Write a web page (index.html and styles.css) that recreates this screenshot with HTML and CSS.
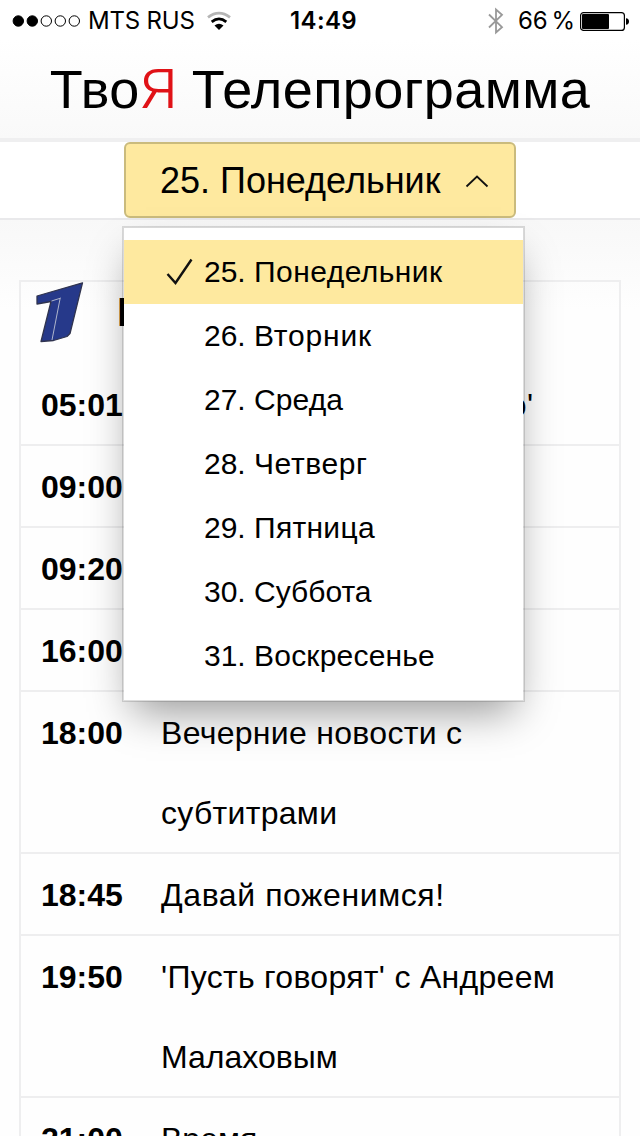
FILE: index.html
```html
<!DOCTYPE html>
<html lang="ru">
<head>
<meta charset="utf-8">
<title>ТвоЯ Телепрограмма</title>
<link rel="stylesheet" href="styles.css">
</head>
<body>
<div class="status">
  <div class="status-side">
    <svg class="signal" width="70" height="14" viewBox="0 0 70 14"><g stroke="#000" stroke-width="1"><circle cx="6.3" cy="7" r="5.2" fill="#000"/><circle cx="20.3" cy="7" r="5.2" fill="#000"/><circle cx="34.3" cy="7" r="5.2" fill="none"/><circle cx="48.3" cy="7" r="5.2" fill="none"/><circle cx="62.3" cy="7" r="5.2" fill="none"/></g></svg>
    <span class="carrier">MTS RUS</span>
    <svg class="wifi" width="24" height="20" viewBox="0 0 24 20"><g fill="none" stroke-width="2.8"><path d="M1 6.3Q12 -2 23 6.3" stroke="#b5b5b5"/><path d="M4.7 10.8Q12 5 19.3 10.8" stroke="#000"/></g><path d="M7.500 14.500Q12 10.800 16.500 14.500L12 19Z"/></svg>
  </div>
  <div class="clock">14:49</div>
  <div class="status-side status-right">
    <svg class="bluetooth" width="16" height="28" viewBox="0 0 16 28"><path d="M1 7.5L14 20.2L8 25.5V2.5L14 7.8L1 20.5" fill="none" stroke="#999" stroke-width="1.8"/></svg>
    <span class="percent">66 %</span>
    <svg width="50" height="20" viewBox="0 0 50 20"><rect x=".6" y="1.6" width="43.8" height="17.8" rx="3" fill="none" stroke="#000" stroke-width="1.2"/><rect x="2" y="3" width="27" height="15" rx="1"/><path d="M46 7.3Q49 7.5 49 10.5T46 13.7Z"/></svg>
  </div>
</div>
<header class="site-header"><h1 class="logo">Тво<span class="logo-accent">Я</span> Телепрограмма</h1></header>
<nav class="day-bar">
  <div class="day-picker">
    <button class="day-button"><span class="day-current">25. Понедельник</span>
      <svg class="chevron" width="24" height="14" viewBox="0 0 24 14"><path d="M1.500 12.500L12 2.500L22.500 12.500" fill="none" stroke="#111" stroke-width="1.800"/></svg>
    </button>
    <ul class="menu">
      <li class="menu-item selected"><svg class="check" width="28" height="28" viewBox="0 0 28 28"><path d="M1.500 16L9.500 25L25.500 1.500" fill="none" stroke="#111" stroke-width="2.400"/></svg><div>25. <span class="track-4">Понедельник</span></div></li>
      <li class="menu-item"><div>26. <span class="track-6">Вторник</span></div></li>
      <li class="menu-item"><div>27. <span class="track-1">Среда</span></div></li>
      <li class="menu-item"><div>28. <span class="track-5">Четверг</span></div></li>
      <li class="menu-item"><div>29. <span class="track-3">Пятница</span></div></li>
      <li class="menu-item"><div>30. Суббота</div></li>
      <li class="menu-item"><div>31. <span class="track-2">Воскресенье</span></div></li>
    </ul>
  </div>
</nav>
<main class="content">
  <section class="channel">
    <div class="channel-head">
      <svg class="channel-logo" width="54" height="66" viewBox="0 0 54 66"><path d="M4 14L49.500 0.800L37 51.500L34 54.500L20.500 58.500L8 59.500L18 19.500L4 22Z" fill="#26398a" stroke="#30344f" stroke-width="1.300" stroke-linejoin="round"/><path d="M27 17L19 58M18.500 19L28 16" fill="none" stroke="#aeb5cc" stroke-width="1"/></svg>
      <h2 class="channel-name">Первый канал</h2>
    </div>
    <div class="row"><time>05:01</time><p class="track-3">Телеканал 'Доброе утро'</p></div>
    <div class="row"><time>09:00</time><p>Новости</p></div>
    <div class="row"><time>09:20</time><p>Сегодня вечером</p></div>
    <div class="row"><time>16:00</time><p>Мужское/Женское</p></div>
    <div class="row"><time>18:00</time><p class="track-3">Вечерние новости с<br>субтитрами</p></div>
    <div class="row"><time>18:45</time><p class="track-5">Давай поженимся!</p></div>
    <div class="row"><time>19:50</time><p><span class="track-3">'Пусть говорят' с Андреем</span><br>Малаховым</p></div>
    <div class="row"><time>21:00</time><p>Время</p></div>
  </section>
</main>
</body>
</html>
```
FILE: styles.css
```css
* { box-sizing: border-box; }
html { height: 1136px; overflow: hidden; }
body { margin: 0; width: 640px; height: 1136px; overflow: hidden; background: #fefefe; color: #000; font-family: "Liberation Sans", Arial, sans-serif; }
svg { display: block; flex: none; }
.track-1 { letter-spacing: .1px; }
.track-2 { letter-spacing: .2px; }
.track-3 { letter-spacing: .3px; }
.track-4 { letter-spacing: .45px; }
.track-5 { letter-spacing: .58px; }
.track-6 { letter-spacing: .8px; }
.status { display: grid; grid-template-columns: 278px auto 1fr; align-items: center; height: 40px; padding: 1px 10px 0 12px; font-family: Inter, sans-serif; font-size: 24px; line-height: 28px; background: #fff; }
.status-side { display: flex; align-items: center; }
.status-right { justify-content: flex-end; }
.carrier { margin-left: 6px; letter-spacing: -.2px; }
.wifi { margin-left: 12px; }
.clock { font-weight: 600; letter-spacing: .4px; }
.bluetooth { margin-right: 14px; }
.percent { margin-right: 5px; white-space: nowrap; word-spacing: -3px; }
.site-header { height: 102px; border-bottom: 4px solid #efeff0; background: linear-gradient(#fff, #f9f9f9); text-align: center; }
.logo { margin: 0; font-size: 54px; font-weight: 400; line-height: 98px; letter-spacing: .4px; white-space: nowrap; }
.logo-accent { display: inline-block; margin-left: 2px; color: #e01217; font-family: Inter, sans-serif; font-weight: 300; line-height: 1; transform: scaleX(1.12); }
.day-bar { display: flex; justify-content: center; height: 78px; background: #fff; border-bottom: 2px solid #e9e9eb; }
.day-picker { position: relative; width: 392px; height: 76px; }
.day-button { display: flex; align-items: center; width: 100%; height: 100%; padding: 1px 25px 0 34px; border: 2px solid #cabb7d; border-radius: 6px; background: #fee99f; color: #000; font: 36px "Liberation Sans", Arial, sans-serif; }
.day-current { white-space: nowrap; }
.chevron { margin-left: auto; }
.menu { position: absolute; z-index: 2; top: 84px; left: -2px; width: 403px; height: 476px; margin: 0; padding: 12px 0; list-style: none; border: 2px solid rgba(0,0,0,.13); background: #fff; background-clip: padding-box; box-shadow: 0 20px 40px -10px rgba(0,0,0,.4); font-size: 30px; }
.menu-item { display: flex; align-items: center; height: 64px; padding-left: 80px; white-space: nowrap; }
.selected { padding-left: 42px; background: #fee99f; }
.check { margin-right: 10px; }
.content { padding: 60px 19px 0; background: linear-gradient(#f8f8f8, #fefefe 90px); }
.channel { border: 2px solid #eeeeef; }
.channel-head { display: flex; height: 82px; padding-left: 12px; }
.channel-name { margin: 0 0 0 30px; font-size: 40px; line-height: 60px; white-space: nowrap; }
.row { display: grid; grid-template-columns: 120px 1fr; padding: 1px 0 0 20px; border-bottom: 2px solid #eeeeef; font-size: 32px; line-height: 80px; }
.row time { font-weight: 700; margin-bottom: -1px; }
.row p { margin: 0 0 -1px; white-space: nowrap; }
```
